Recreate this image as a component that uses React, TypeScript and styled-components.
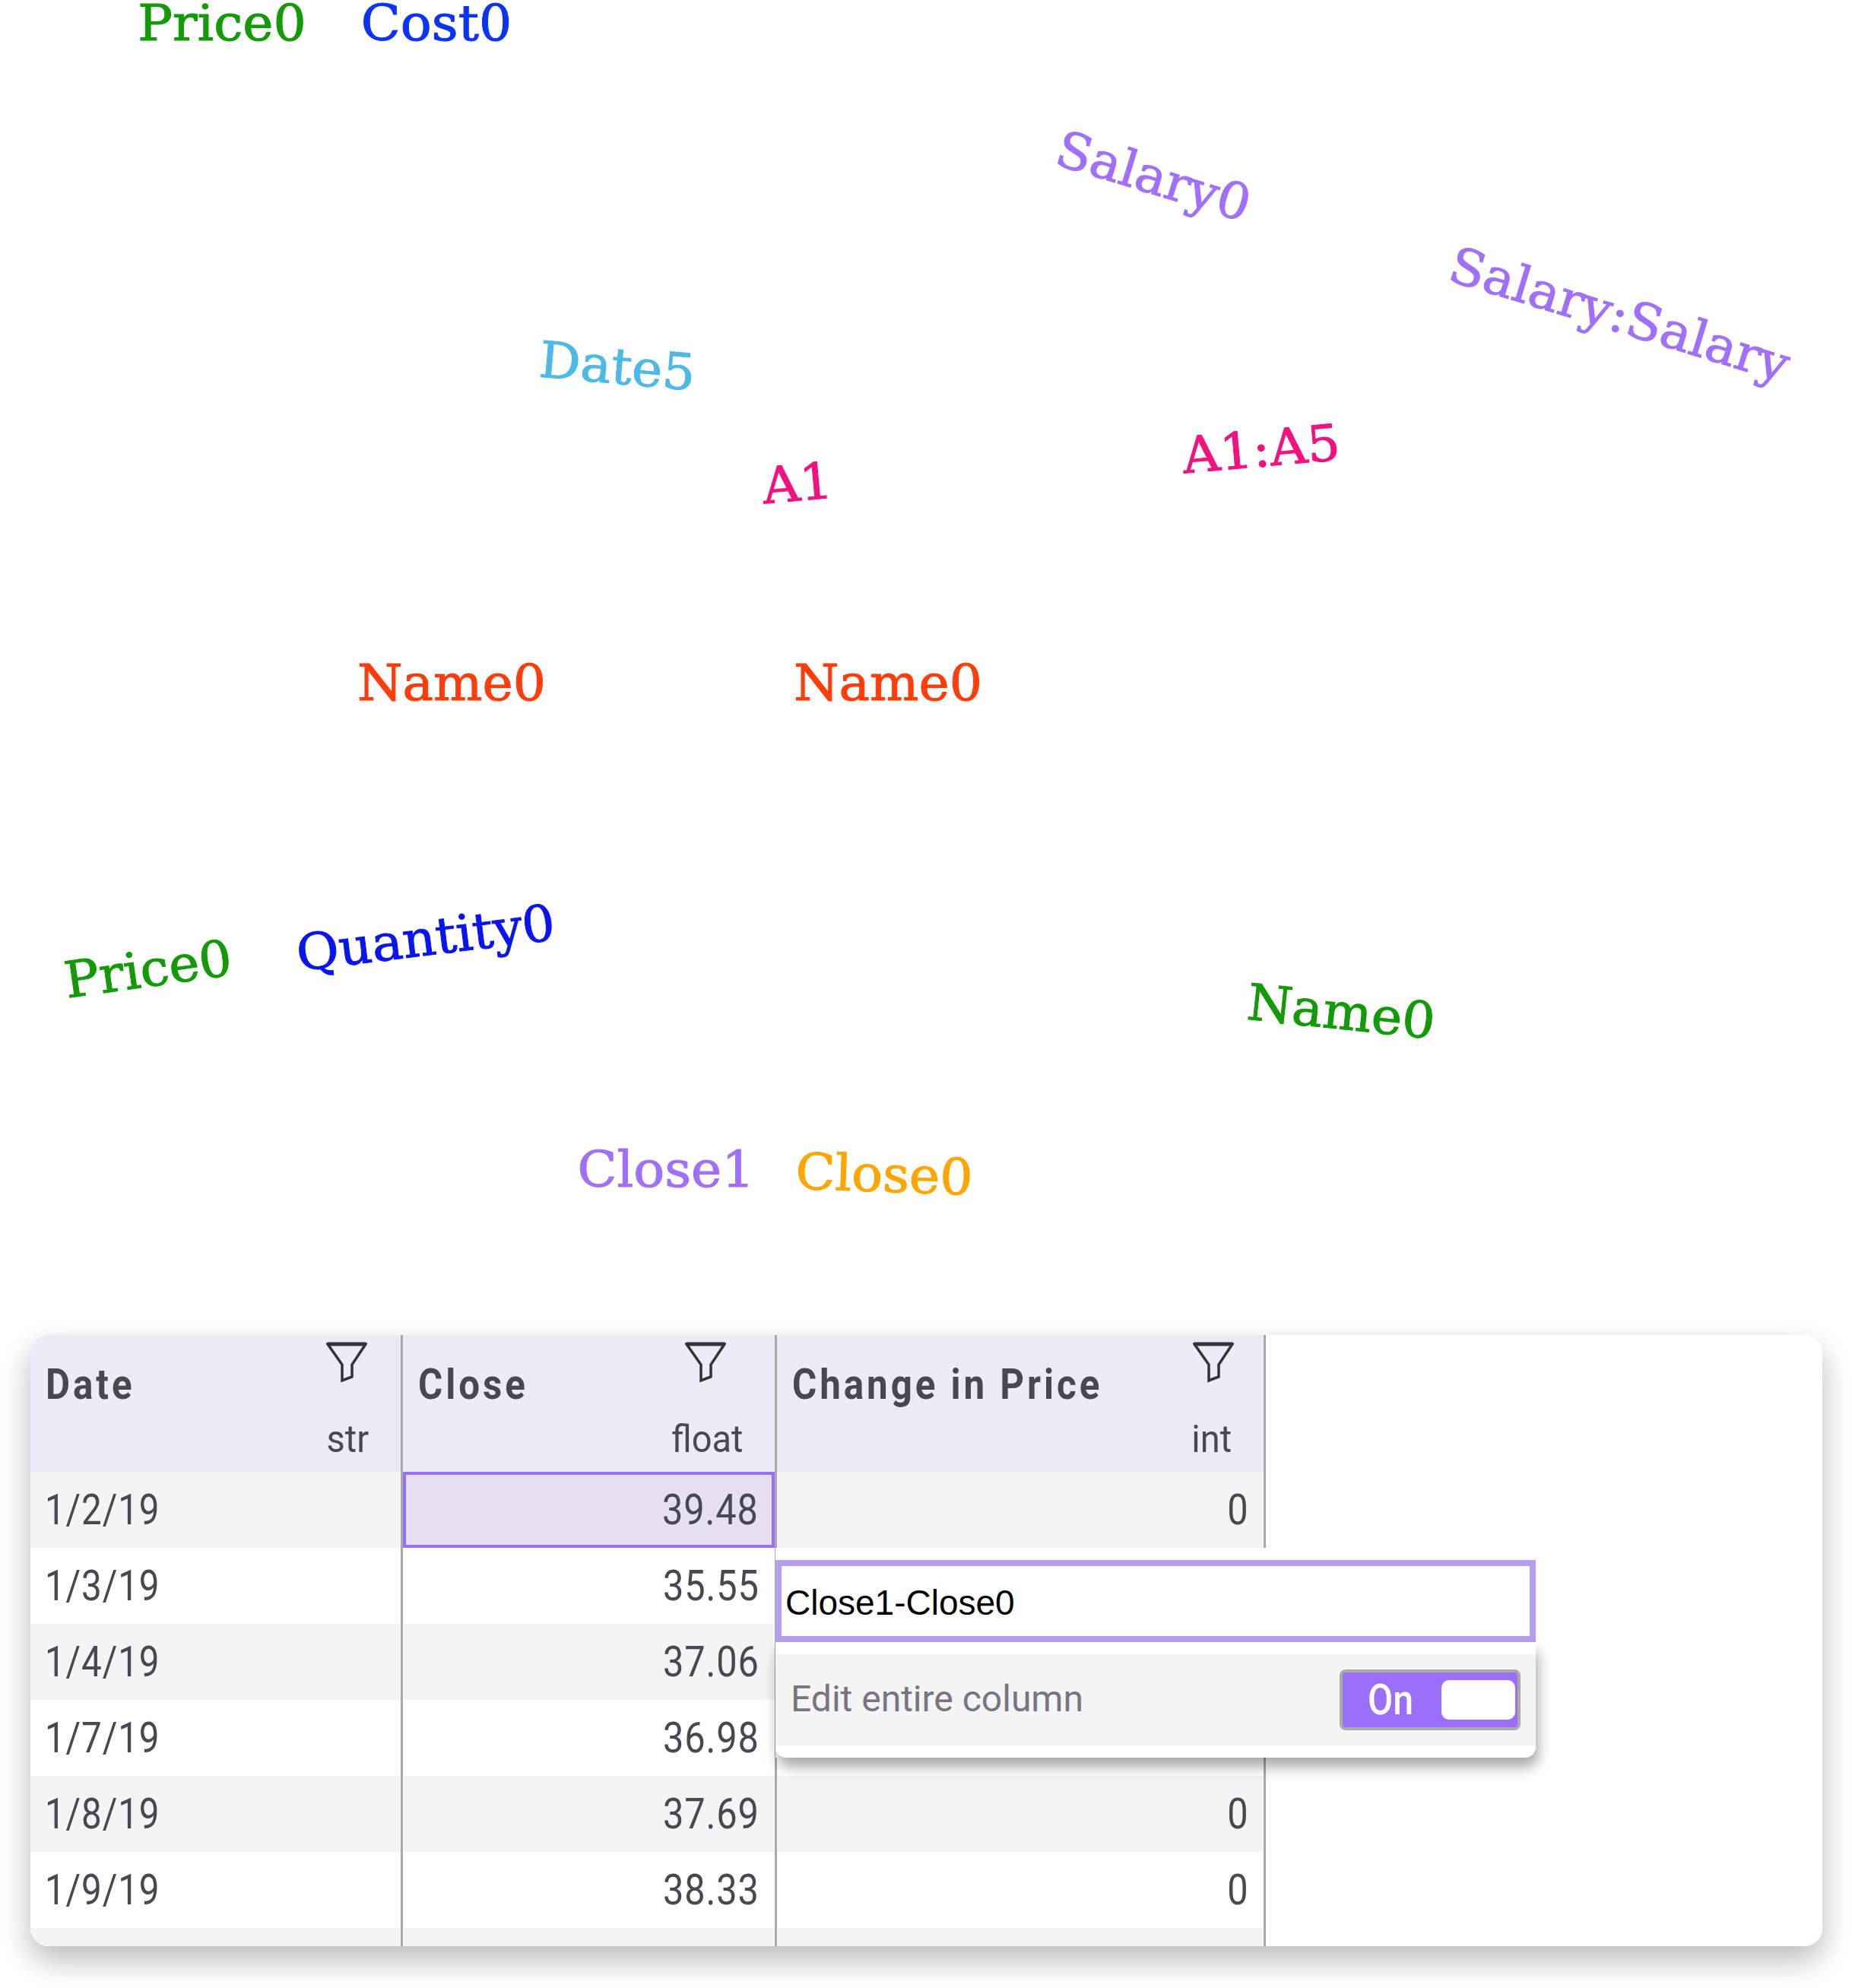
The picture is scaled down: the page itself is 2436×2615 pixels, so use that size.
import React from "react";
import styled, { createGlobalStyle } from "styled-components";

const GlobalStyle = createGlobalStyle`
  html, body {
    margin: 0;
    padding: 0;
    background: #fff;
  }
  * {
    box-sizing: border-box;
  }
`;

const Page = styled.div`
  width: 2436px;
  height: 2615px;
  overflow: hidden;
  background: #fff;
`;

const Canvas = styled.div`
  position: relative;
  height: 1756px;
`;

const Label = styled.span<{ $x: number; $y: number; $angle: number; $color: string }>`
  position: absolute;
  left: ${(p) => p.$x}px;
  top: ${(p) => p.$y + 3}px;
  transform: translate(-50%, -50%) rotate(${(p) => p.$angle}deg) scaleX(1.03);
  color: ${(p) => p.$color};
  font-family: "DejaVu Serif", serif;
  font-size: 66px;
  line-height: 0.8;
  -webkit-text-stroke: 1px ${(p) => p.$color};
  white-space: nowrap;
`;

const GREEN = "#149a08";
const BLUE = "#0a33f5";
const PURPLE = "#a070fa";
const PINK = "#f2127f";
const RED = "#ff3d0a";

const labels = [
  { text: "Price0", x: 292, y: 28, angle: 0, color: GREEN },
  { text: "Cost0", x: 574, y: 28, angle: 0, color: BLUE },
  { text: "Salary0", x: 1517, y: 230, angle: 17, color: PURPLE },
  { text: "Salary:Salary", x: 2130, y: 412, angle: 17, color: PURPLE },
  { text: "Date5", x: 812, y: 480, angle: 5, color: "#4fb9e6" },
  { text: "A1", x: 1049, y: 634, angle: -5, color: PINK },
  { text: "A1:A5", x: 1659, y: 589, angle: -5, color: PINK },
  { text: "Name0", x: 594, y: 896, angle: 0, color: RED },
  { text: "Name0", x: 1168, y: 896, angle: 0, color: RED },
  { text: "Price0", x: 195, y: 1273, angle: -8, color: GREEN },
  { text: "Quantity0", x: 560, y: 1232, angle: -7, color: "#0a14ee" },
  { text: "Name0", x: 1764, y: 1329, angle: 6, color: GREEN },
  { text: "Close1", x: 876, y: 1536, angle: 0, color: PURPLE },
  { text: "Close0", x: 1163, y: 1543, angle: 2, color: "#ffa500" },
];

const TableShadow = styled.div`
  position: relative;
  width: 2357px;
  height: 804px;
  margin-left: 40px;
  border-radius: 24px;
  box-shadow: 0 18px 40px rgba(0, 0, 0, 0.28);
`;

const Table = styled.div`
  display: flex;
  height: 100%;
  border-radius: 24px;
  overflow: hidden;
  background: #fff;
`;

const Column = styled.div<{ $width: number }>`
  flex: 0 0 ${(p) => p.$width}px;
  display: flex;
  flex-direction: column;
  border-right: 3px solid #a9a9a9;
`;

const HeaderCell = styled.div`
  position: relative;
  flex: 0 0 180px;
  background: #e9ebf6;
  color: #484853;
`;

const HeaderTitle = styled.div`
  position: absolute;
  left: 20px;
  top: 35px;
  font-family: Roboto, sans-serif;
  font-size: 56px;
  line-height: 60px;
  font-weight: 700;
  letter-spacing: 4.5px;
  white-space: nowrap;
  transform: scaleX(0.88);
  transform-origin: left center;
`;

const HeaderType = styled.div`
  position: absolute;
  right: 42px;
  top: 107px;
  font-family: Roboto, sans-serif;
  font-size: 50px;
  line-height: 60px;
  transform: scaleX(0.94);
  transform-origin: right center;
`;

const FilterIcon = styled.svg<{ $right: number }>`
  position: absolute;
  right: ${(p) => p.$right}px;
  top: 9px;
  width: 54px;
  height: 54px;
`;

const Cell = styled.div<{ $striped: boolean; $right?: boolean; $selected?: boolean }>`
  flex: 0 0 100px;
  display: flex;
  align-items: center;
  justify-content: ${(p) => (p.$right ? "flex-end" : "flex-start")};
  padding: ${(p) => (p.$right ? `0 ${p.$selected ? 17 : 20}px 0 0` : "0 0 0 19px")};
  background: ${(p) => (p.$selected ? "#e5dff3" : p.$striped ? "#f4f4f4" : "#fff")};
  border: ${(p) => (p.$selected ? "4px solid #9b70f8" : "none")};
`;

const CellText = styled.span<{ $right?: boolean }>`
  display: inline-block;
  font-family: Roboto, sans-serif;
  font-size: 56px;
  line-height: 60px;
  letter-spacing: 1px;
  color: #484853;
  transform: scaleX(${(p) => (p.$right ? 0.87 : 0.85)});
  transform-origin: ${(p) => (p.$right ? "right" : "left")} center;
`;

const LastColumn = styled.div`
  flex: 1;
  background: #fff;
`;

const Popover = styled.div`
  position: absolute;
  left: 980px;
  top: 280px;
  width: 1000px;
  padding-top: 16px;
  background: #fff;
`;

const FormulaInput = styled.div`
  height: 108px;
  border: 8px solid #b79ff0;
  background: #fff;
  padding: 4px 0 0 5px;
  display: flex;
  align-items: center;
  font-family: "Liberation Sans", sans-serif;
  font-size: 46px;
  color: #000;
`;

const Panel = styled.div`
  height: 152px;
  padding: 16px 0;
  background: #fff;
  border-radius: 0 0 14px 14px;
  box-shadow: 3px 12px 18px rgba(0, 0, 0, 0.35);
`;

const PanelRow = styled.div`
  height: 120px;
  background: #f4f4f4;
  display: flex;
  align-items: center;
  justify-content: space-between;
  padding: 0 20px 0 20px;
`;

const PanelLabel = styled.span`
  margin-bottom: 4px;
  font-family: Roboto, sans-serif;
  font-size: 48px;
  color: #77757f;
`;

const Toggle = styled.div`
  width: 238px;
  height: 80px;
  display: flex;
  align-items: center;
  justify-content: space-between;
  padding: 0 3px 0 33px;
  background: #9b70f8;
  border: 4px solid #a9a9a9;
  border-radius: 8px;
`;

const ToggleText = styled.span`
  display: inline-block;
  font-family: Roboto, sans-serif;
  font-size: 56px;
  font-weight: 500;
  line-height: 1;
  color: #fff;
  transform: scaleX(0.86);
  transform-origin: left center;
`;

const ToggleThumb = styled.div`
  width: 97px;
  height: 52px;
  background: #fff;
  border-radius: 10px;
`;

function Filter({ right }: { right: number }) {
  return (
    <FilterIcon $right={right} viewBox="0 0 54 54" fill="none" stroke="#333338" strokeWidth="3.5">
      <path d="M2 3 H52 L34 30 V46 L21 51 V30 Z" strokeLinejoin="miter" />
      <path d="M2 3 H52" strokeWidth="5" />
    </FilterIcon>
  );
}

const rows = [
  { date: "1/2/19", close: "39.48", change: "0" },
  { date: "1/3/19", close: "35.55", change: "" },
  { date: "1/4/19", close: "37.06", change: "" },
  { date: "1/7/19", close: "36.98", change: "" },
  { date: "1/8/19", close: "37.69", change: "0" },
  { date: "1/9/19", close: "38.33", change: "0" },
];

const columns = [
  { title: "Date", type: "str", key: "date", width: 490, right: false, filterRight: 44 },
  { title: "Close", type: "float", key: "close", width: 492, right: true, filterRight: 64 },
  { title: "Change in Price", type: "int", key: "change", width: 643, right: true, filterRight: 39 },
] as const;

export default function App() {
  return (
    <Page>
      <GlobalStyle />
      <Canvas>
        {labels.map((l, i) => (
          <Label key={i} $x={l.x} $y={l.y} $angle={l.angle} $color={l.color}>
            {l.text}
          </Label>
        ))}
      </Canvas>
      <TableShadow>
        <Table>
          {columns.map((col) => (
            <Column key={col.title} $width={col.width}>
              <HeaderCell>
                <HeaderTitle>{col.title}</HeaderTitle>
                <Filter right={col.filterRight} />
                <HeaderType>{col.type}</HeaderType>
              </HeaderCell>
              {rows.map((row, i) => (
                <Cell
                  key={row.date}
                  $striped={i % 2 === 0}
                  $right={col.right}
                  $selected={col.key === "close" && i === 0}
                >
                  <CellText $right={col.right}>{row[col.key]}</CellText>
                </Cell>
              ))}
              <Cell $striped={true} />
            </Column>
          ))}
          <LastColumn />
        </Table>
        <Popover>
          <FormulaInput>Close1-Close0</FormulaInput>
          <Panel>
            <PanelRow>
              <PanelLabel>Edit entire column</PanelLabel>
              <Toggle>
                <ToggleText>On</ToggleText>
                <ToggleThumb />
              </Toggle>
            </PanelRow>
          </Panel>
        </Popover>
      </TableShadow>
    </Page>
  );
}
